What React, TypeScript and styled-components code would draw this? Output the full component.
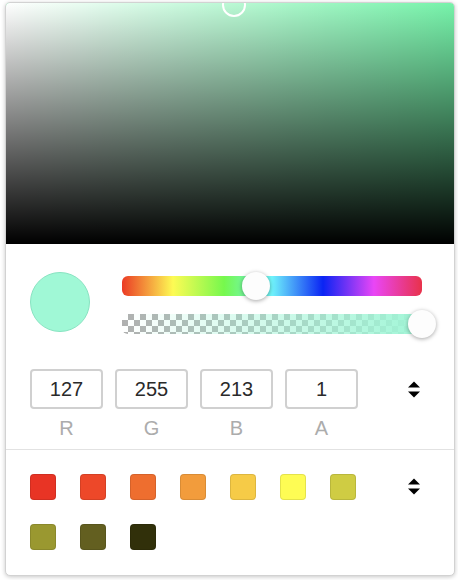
import React from 'react';
import styled, { createGlobalStyle } from 'styled-components';

const GlobalStyle = createGlobalStyle`
  html, body {
    margin: 0;
    padding: 0;
    background: #ffffff;
    font-family: "Liberation Sans", Arial, sans-serif;
  }
`;

const Page = styled.div`
  width: 458px;
  height: 580px;
  padding: 2px 0 0 5px;
  box-sizing: border-box;
`;

const Card = styled.div`
  width: 450px;
  height: 574px;
  box-sizing: border-box;
  border: 1px solid #d2d2d2;
  border-radius: 5px;
  overflow: hidden;
  background: #fff;
  box-shadow: 0 1px 4px rgba(0, 0, 0, 0.22);
  display: flex;
  flex-direction: column;
`;

const Saturation = styled.div<{ $hue: string }>`
  position: relative;
  height: 241px;
  flex-shrink: 0;
  background:
    linear-gradient(to top, #000 0%, rgba(0, 0, 0, 0) 100%),
    linear-gradient(to right, #fff 0%, rgba(255, 255, 255, 0) 100%),
    ${(p) => p.$hue};
`;

const SatPointer = styled.div`
  position: absolute;
  width: 20px;
  height: 20px;
  border: 2px solid #fff;
  border-radius: 50%;
  transform: translate(-50%, -50%);
`;

const Body = styled.div`
  padding: 28px 32px 0 24px;
  height: 206px;
  flex-shrink: 0;
  box-sizing: border-box;
  border-bottom: 1px solid #e2e2e2;
`;

const TopRow = styled.div`
  display: flex;
  align-items: flex-start;
  gap: 32px;
`;

const Preview = styled.div<{ $color: string }>`
  width: 60px;
  height: 60px;
  border-radius: 50%;
  box-sizing: border-box;
  background: ${(p) => p.$color};
  border: 1px solid #88e3c1;
  flex-shrink: 0;
`;

const Sliders = styled.div`
  flex: 1;
  display: flex;
  flex-direction: column;
  gap: 18px;
  margin-top: 4px;
`;

const Track = styled.div`
  position: relative;
  height: 20px;
  border-radius: 6px;
`;

const HueTrack = styled(Track)`
  background: linear-gradient(
    to right,
    #eb3b25 0%,
    #fdfb54 17%,
    #76f84d 34%,
    #6ff3fb 50%,
    #0a24f4 67%,
    #e946f6 84%,
    #e8324a 100%
  );
`;

const AlphaTrack = styled(Track)`
  background-color: #fff;
  background-image:
    linear-gradient(to right, rgba(160, 245, 214, 0) 0%, #a0f5d6 100%),
    linear-gradient(45deg, #b0b0b0 25%, transparent 25%, transparent 75%, #b0b0b0 75%),
    linear-gradient(45deg, #b0b0b0 25%, transparent 25%, transparent 75%, #b0b0b0 75%);
  background-size: 100% 100%, 12px 12px, 12px 12px;
  background-position: 0 0, 0 0, 6px 6px;
`;

const Thumb = styled.div`
  position: absolute;
  top: 50%;
  width: 28px;
  height: 28px;
  border-radius: 50%;
  background: #fdfdfd;
  box-shadow: 0 1px 4px rgba(0, 0, 0, 0.35);
  transform: translate(-50%, -50%);
`;

const FieldsRow = styled.div`
  display: flex;
  align-items: flex-start;
  margin-top: 35px;
`;

const Fields = styled.div`
  display: flex;
  gap: 12px;
`;

const Field = styled.div`
  display: flex;
  flex-direction: column;
  align-items: center;
  width: 73px;
`;

const Input = styled.div`
  width: 100%;
  height: 40px;
  box-sizing: border-box;
  border: 2px solid #d0d0d0;
  border-radius: 4px;
  display: flex;
  align-items: center;
  justify-content: center;
  font-size: 20px;
  color: #2a2a2a;
`;

const Label = styled.div`
  margin-top: 8px;
  font-size: 20px;
  color: #acacac;
`;

const Toggle = styled.div<{ $top: number }>`
  margin-left: auto;
  margin-right: 2px;
  margin-top: ${(p) => p.$top}px;
  width: 12px;
  height: 17px;
  display: flex;
`;

const Swatches = styled.div`
  display: flex;
  align-items: flex-start;
  padding: 24px 32px 0 24px;
`;

const SwatchGrid = styled.div`
  display: grid;
  grid-template-columns: repeat(7, 26px);
  gap: 24px;
`;

const Swatch = styled.div<{ $color: string }>`
  width: 26px;
  height: 26px;
  box-sizing: border-box;
  border-radius: 4px;
  background: ${(p) => p.$color};
  box-shadow: inset 0 0 0 1px rgba(0, 0, 0, 0.1);
`;

const ArrowsIcon = () => (
  <svg width="12" height="17" viewBox="0 0 12 17">
    <path d="M0 6.5 L6 0.5 L12 6.5 Z" fill="#000" />
    <path d="M0 10.5 L12 10.5 L6 16.5 Z" fill="#000" />
  </svg>
);

const swatches = [
  '#e83425',
  '#ed4829',
  '#ee6e2f',
  '#f29c3c',
  '#f6cb47',
  '#fefc54',
  '#cfcc43',
  '#9a9830',
  '#635f20',
  '#31300a',
];

const channels = [
  { label: 'R', value: '127' },
  { label: 'G', value: '255' },
  { label: 'B', value: '213' },
  { label: 'A', value: '1' },
];

function App() {
  return (
    <Page>
      <GlobalStyle />
      <Card>
        <Saturation $hue="#76f3aa">
          <SatPointer style={{ left: '50.8%', top: '2px' }} />
        </Saturation>
        <Body>
          <TopRow>
            <Preview $color="#a0f8d6" />
            <Sliders>
              <HueTrack>
                <Thumb style={{ left: '44.7%' }} />
              </HueTrack>
              <AlphaTrack>
                <Thumb style={{ left: '100%' }} />
              </AlphaTrack>
            </Sliders>
          </TopRow>
          <FieldsRow>
            <Fields>
              {channels.map((c) => (
                <Field key={c.label}>
                  <Input>{c.value}</Input>
                  <Label>{c.label}</Label>
                </Field>
              ))}
            </Fields>
            <Toggle $top={12}>
              <ArrowsIcon />
            </Toggle>
          </FieldsRow>
        </Body>
        <Swatches>
          <SwatchGrid>
            {swatches.map((c) => (
              <Swatch key={c} $color={c} />
            ))}
          </SwatchGrid>
          <Toggle $top={4}>
            <ArrowsIcon />
          </Toggle>
        </Swatches>
      </Card>
    </Page>
  );
}

export default App;
